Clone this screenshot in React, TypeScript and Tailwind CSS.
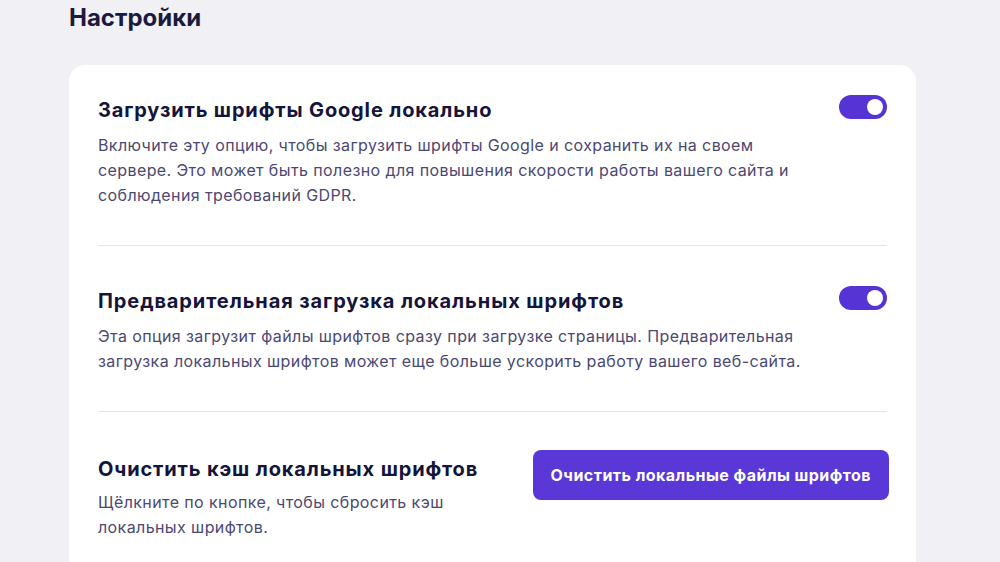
import { useState } from "react";

const FONT = { fontFamily: "Inter, 'Noto Sans', sans-serif" };

function Toggle({ on, onClick }: { on: boolean; onClick: () => void }) {
  return (
    <button
      type="button"
      onClick={onClick}
      className={`relative h-6 w-12 shrink-0 rounded-full transition-colors ${
        on ? "bg-[#5533d4]" : "bg-[#d5d4e0]"
      }`}
    >
      <span
        className={`absolute top-1 h-4 w-4 rounded-full bg-white transition-all ${
          on ? "left-[28px]" : "left-1"
        }`}
      />
    </button>
  );
}

export default function App() {
  const [localFonts, setLocalFonts] = useState(true);
  const [preload, setPreload] = useState(true);

  return (
    <div style={FONT} className="min-h-[562px] w-full overflow-hidden bg-[#f0f0f5] pl-[69px] pt-[2px]">
      <h1 className="text-[24px] font-bold leading-8 text-[#1b1a3d]">Настройки</h1>

      <div className="mt-[31px] w-[847px] rounded-2xl bg-white px-[29px] pt-[30px]">
        {/* Google fonts local */}
        <div className="border-b border-[#e4e4ec] pb-[37px]">
          <div className="flex items-start justify-between gap-6">
            <div>
              <h2 className="text-[20px] font-bold leading-[30px] tracking-[0.85px] text-[#15143a]">
                Загрузить шрифты Google локально
              </h2>
              <p className="mt-[8px] max-w-[705px] text-[16px] leading-[25px] tracking-[0.4px] text-[#4b4872]">
                Включите эту опцию, чтобы загрузить шрифты Google и сохранить их на своем сервере. Это может быть
                полезно для повышения скорости работы вашего сайта и соблюдения требований GDPR.
              </p>
            </div>
            <Toggle on={localFonts} onClick={() => setLocalFonts(!localFonts)} />
          </div>
        </div>

        {/* Preload */}
        <div className="border-b border-[#e4e4ec] pb-[37px] pt-[40px]">
          <div className="flex items-start justify-between gap-6">
            <div>
              <h2 className="text-[20px] font-bold leading-[30px] tracking-[0.9px] text-[#15143a]">
                Предварительная загрузка локальных шрифтов
              </h2>
              <p className="mt-[8px] max-w-[740px] text-[16px] leading-[25px] tracking-[0.4px] text-[#4b4872]">
                Эта опция загрузит файлы шрифтов сразу при загрузке страницы. Предварительная загрузка локальных
                шрифтов может еще больше ускорить работу вашего веб-сайта.
              </p>
            </div>
            <Toggle on={preload} onClick={() => setPreload(!preload)} />
          </div>
        </div>

        {/* Clear cache */}
        <div className="flex items-start justify-between pb-10 pt-[42px]">
          <div className="w-[400px]">
            <h2 className="text-[20px] font-bold leading-[30px] tracking-[0.85px] text-[#15143a]">
              Очистить кэш локальных шрифтов
            </h2>
            <p className="mt-[6px] text-[16px] leading-[25px] tracking-[0.4px] text-[#4b4872]">
              Щёлкните по кнопке, чтобы сбросить кэш локальных шрифтов.
            </p>
          </div>
          <button
            type="button"
            className="-mr-[2px] mt-[-4px] h-[50px] rounded-lg bg-[#5a38d8] px-[18px] text-[16px] font-bold tracking-[0.45px] text-white"
          >
            Очистить локальные файлы шрифтов
          </button>
        </div>
      </div>
    </div>
  );
}
